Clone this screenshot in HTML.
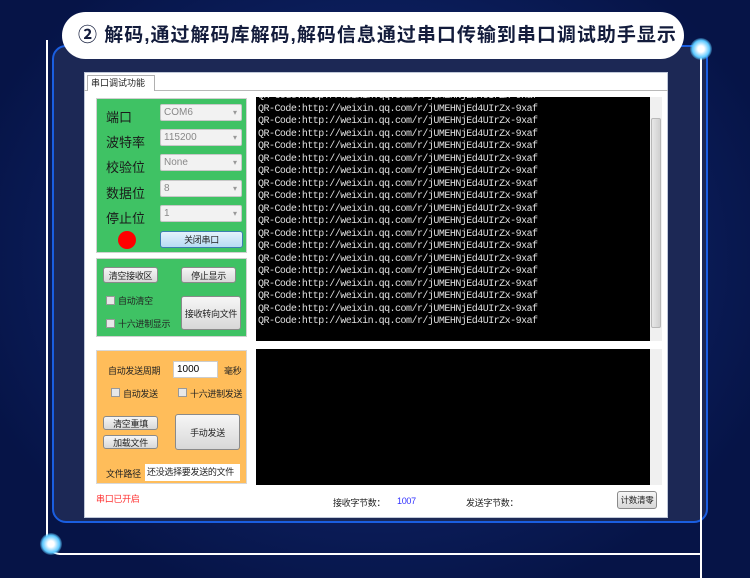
<!DOCTYPE html>
<html><head><meta charset="utf-8"><style>
*{margin:0;padding:0;box-sizing:border-box}
body{width:750px;height:578px;overflow:hidden;background:#061447;font-family:"Liberation Sans","Noto Sans CJK SC",sans-serif;position:relative}
.a{position:absolute;white-space:nowrap}
.btn{position:absolute;white-space:nowrap;background:linear-gradient(#f6f6f6,#d8d8d8);border:1px solid #8a8a8a;border-radius:3px;font-size:9px;color:#222;text-align:center;display:flex;align-items:center;justify-content:center;letter-spacing:-0.3px}
.sel{position:absolute;left:160px;width:82px;height:17px;background:#f2f2f2;border:1px solid #c8c8c8;border-radius:2px;font-size:10px;color:#888;padding-left:3px;line-height:15px}
.sel:after{content:"▾";position:absolute;right:4px;top:0;font-size:8px;color:#999}
.lab{position:absolute;left:106px;font-size:13px;color:#1a1a1a;white-space:nowrap}
.cb{position:absolute;width:9px;height:9px;border:1px solid #999;background:#e8e8e8}
.t{position:absolute;font-size:9px;color:#222;white-space:nowrap;letter-spacing:-0.3px}
.term{font-family:"Liberation Mono",monospace;font-size:10px;letter-spacing:-0.52px;color:#e0e0e0;line-height:12.5px;white-space:pre}
</style></head><body>
<div class="a" style="left:0;top:0;width:750px;height:578px;background:radial-gradient(ellipse at 50% 45%,#1f3a80 0%,#0d2060 45%,#061447 80%)"></div>
<div class="a" style="left:52px;top:45px;width:656px;height:478px;border:2px solid #1a5ee0;border-radius:14px;background:#1c2855"></div>
<div class="a" style="left:46px;top:40px;width:656px;height:515px;border-left:2px solid #fff;border-bottom:2px solid #fff;border-radius:0 0 0 14px"></div>
<div class="a" style="left:700px;top:45px;width:2px;height:533px;background:#fff"></div>
<div class="a" style="left:690px;top:38px;width:22px;height:22px;border-radius:50%;background:radial-gradient(#fff 20%,#5ac8ff 55%,transparent 75%)"></div>
<div class="a" style="left:40px;top:533px;width:22px;height:22px;border-radius:50%;background:radial-gradient(#fff 20%,#5ac8ff 55%,transparent 75%)"></div>
<div class="a" style="left:62px;top:12px;width:622px;height:47px;background:#fff;border-radius:24px;font-size:19px;font-weight:bold;color:#131c3c;line-height:47px;padding-left:16px;letter-spacing:1px">② 解码,通过解码库解码,解码信息通过串口传输到串口调试助手显示</div>

<div class="a" style="left:84px;top:72px;width:584px;height:446px;background:#fff;border:1px solid #c0c8d8"></div>
<div class="a" style="left:84px;top:90px;width:584px;height:1px;background:#b8b8b8"></div>
<div class="a" style="left:87px;top:75px;width:68px;height:16px;background:#fff;border:1px solid #b0b0b0;border-bottom:none;font-size:9px;line-height:15px;padding-left:3px;color:#222">串口调试功能</div>

<div class="a" style="left:96px;top:98px;width:151px;height:155px;background:#3fc264;border:1px solid #d0d0d0"></div>
<div class="lab" style="top:107px">端口</div><div class="sel" style="top:104px">COM6</div>
<div class="lab" style="top:132px">波特率</div><div class="sel" style="top:129px">115200</div>
<div class="lab" style="top:157px">校验位</div><div class="sel" style="top:154px">None</div>
<div class="lab" style="top:183px">数据位</div><div class="sel" style="top:180px">8</div>
<div class="lab" style="top:208px">停止位</div><div class="sel" style="top:205px">1</div>
<div class="a" style="left:118px;top:231px;width:18px;height:18px;border-radius:50%;background:#f00"></div>
<div class="btn" style="left:160px;top:231px;width:83px;height:17px;background:linear-gradient(#e4f2fc,#b8dcf4);border-color:#3c7fb1">关闭串口</div>

<div class="a" style="left:96px;top:258px;width:151px;height:79px;background:#3fc264;border:1px solid #d0d0d0"></div>
<div class="btn" style="left:103px;top:267px;width:55px;height:16px">清空接收区</div>
<div class="btn" style="left:181px;top:267px;width:55px;height:16px">停止显示</div>
<div class="cb" style="left:106px;top:296px"></div><div class="t" style="left:118px;top:294px">自动清空</div>
<div class="cb" style="left:106px;top:319px"></div><div class="t" style="left:118px;top:317px">十六进制显示</div>
<div class="btn" style="left:181px;top:296px;width:60px;height:34px">接收转向文件</div>

<div class="a" style="left:96px;top:350px;width:151px;height:134px;background:#ffbd5a;border:1px solid #d8d8d8"></div>
<div class="t" style="left:108px;top:364px">自动发送周期</div>
<div class="a" style="left:173px;top:361px;width:45px;height:17px;background:#fff;border:1px solid #ccc;font-size:10px;line-height:15px;padding-left:3px">1000</div>
<div class="t" style="left:224px;top:364px">毫秒</div>
<div class="cb" style="left:111px;top:388px"></div><div class="t" style="left:123px;top:387px">自动发送</div>
<div class="cb" style="left:178px;top:388px"></div><div class="t" style="left:190px;top:387px">十六进制发送</div>
<div class="btn" style="left:103px;top:416px;width:55px;height:14px">清空重填</div>
<div class="btn" style="left:103px;top:435px;width:55px;height:14px">加载文件</div>
<div class="btn" style="left:175px;top:414px;width:65px;height:36px">手动发送</div>
<div class="t" style="left:106px;top:467px">文件路径</div>
<div class="a" style="left:145px;top:464px;width:95px;height:17px;background:#fff;font-size:9px;line-height:17px;padding-left:2px;color:#222;letter-spacing:-0.3px;overflow:hidden">还没选择要发送的文件</div>

<div class="a term" style="left:256px;top:97px;width:394px;height:244px;background:#000;overflow:hidden;padding:0 0 0 2px"><div style="margin-top:-6px">QR-Code:http://weixin.qq.com/r/jUMEHNjEd4UIrZx-9xaf
QR-Code:http://weixin.qq.com/r/jUMEHNjEd4UIrZx-9xaf
QR-Code:http://weixin.qq.com/r/jUMEHNjEd4UIrZx-9xaf
QR-Code:http://weixin.qq.com/r/jUMEHNjEd4UIrZx-9xaf
QR-Code:http://weixin.qq.com/r/jUMEHNjEd4UIrZx-9xaf
QR-Code:http://weixin.qq.com/r/jUMEHNjEd4UIrZx-9xaf
QR-Code:http://weixin.qq.com/r/jUMEHNjEd4UIrZx-9xaf
QR-Code:http://weixin.qq.com/r/jUMEHNjEd4UIrZx-9xaf
QR-Code:http://weixin.qq.com/r/jUMEHNjEd4UIrZx-9xaf
QR-Code:http://weixin.qq.com/r/jUMEHNjEd4UIrZx-9xaf
QR-Code:http://weixin.qq.com/r/jUMEHNjEd4UIrZx-9xaf
QR-Code:http://weixin.qq.com/r/jUMEHNjEd4UIrZx-9xaf
QR-Code:http://weixin.qq.com/r/jUMEHNjEd4UIrZx-9xaf
QR-Code:http://weixin.qq.com/r/jUMEHNjEd4UIrZx-9xaf
QR-Code:http://weixin.qq.com/r/jUMEHNjEd4UIrZx-9xaf
QR-Code:http://weixin.qq.com/r/jUMEHNjEd4UIrZx-9xaf
QR-Code:http://weixin.qq.com/r/jUMEHNjEd4UIrZx-9xaf
QR-Code:http://weixin.qq.com/r/jUMEHNjEd4UIrZx-9xaf
QR-Code:http://weixin.qq.com/r/jUMEHNjEd4UIrZx-9xaf</div></div>
<div class="a" style="left:650px;top:97px;width:12px;height:244px;background:#f0f0f0"></div>
<div class="a" style="left:651px;top:118px;width:10px;height:210px;background:linear-gradient(90deg,#e8e8e8,#d0d0d0);border:1px solid #b8b8b8;border-radius:2px"></div>
<div class="a" style="left:256px;top:349px;width:394px;height:136px;background:#000"></div>
<div class="a" style="left:650px;top:349px;width:12px;height:136px;background:#f0f0f0"></div>

<div class="a" style="left:96px;top:492px;font-size:9px;color:#f33;letter-spacing:-0.3px">串口已开启</div>
<div class="t" style="left:333px;top:496px">接收字节数：</div>
<div class="t" style="left:397px;top:496px;color:#33f">1007</div>
<div class="t" style="left:466px;top:496px">发送字节数：</div>
<div class="btn" style="left:617px;top:491px;width:40px;height:18px;font-size:8.5px">计数清零</div>
</body></html>
